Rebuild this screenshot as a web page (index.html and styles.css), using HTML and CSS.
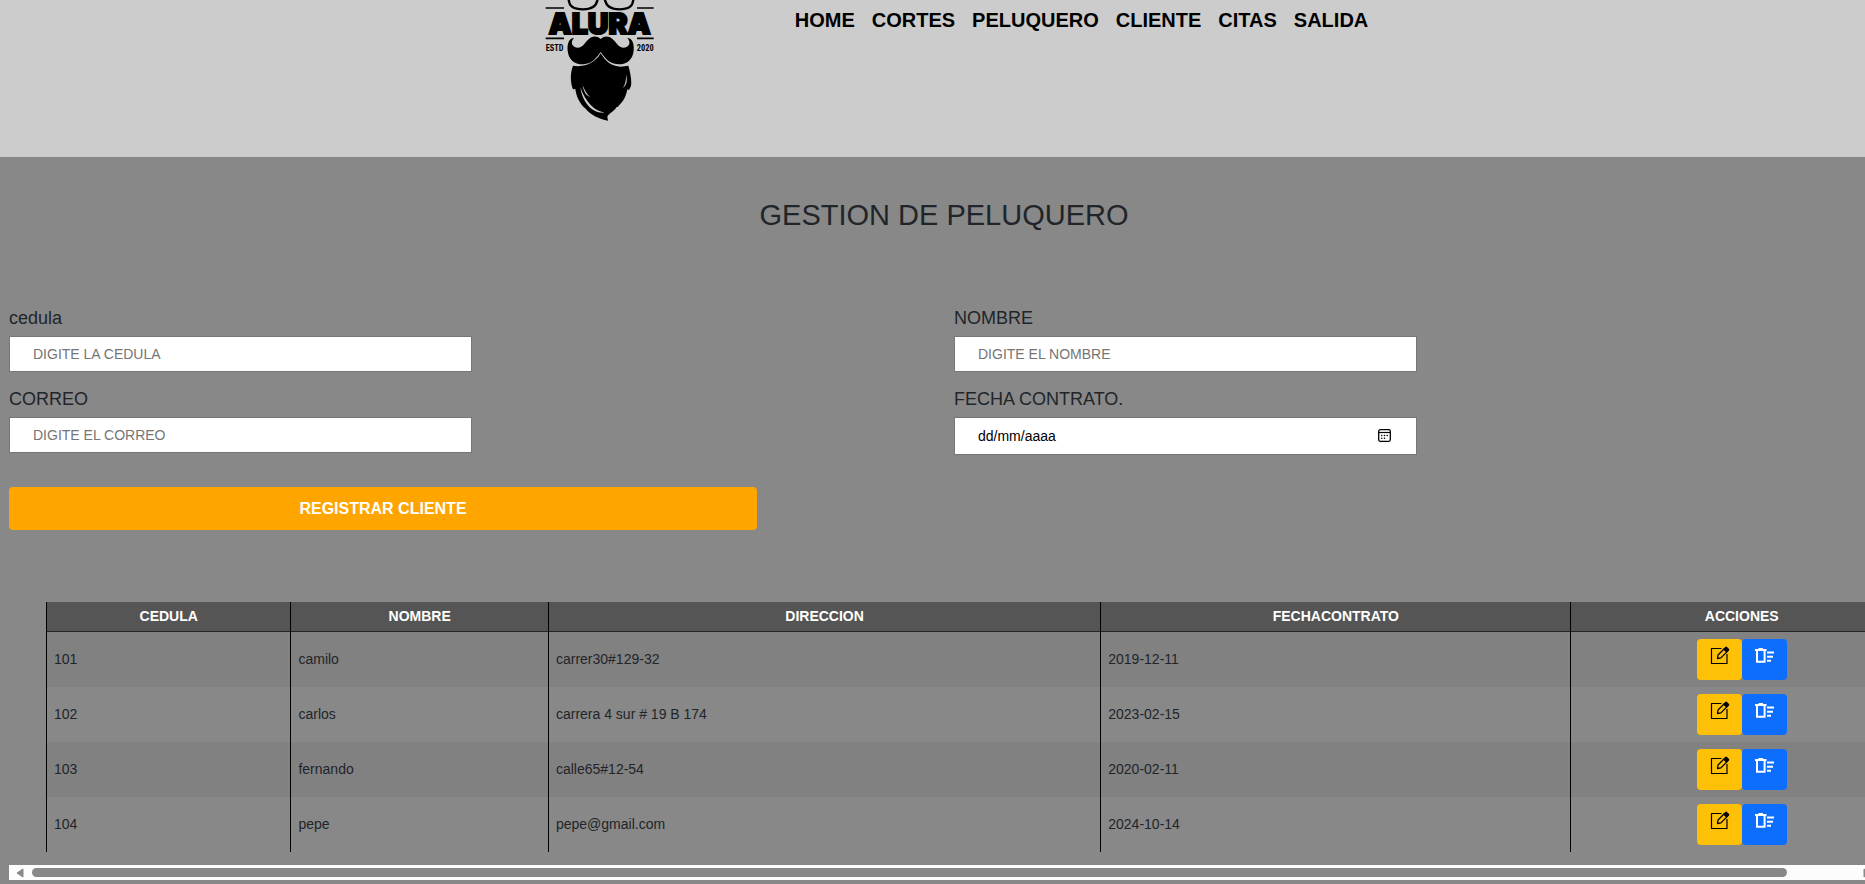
FILE: index.html
```html
<!DOCTYPE html>
<html lang="es">
<head>
<meta charset="utf-8">
<title>Gestion de peluquero</title>
<link rel="stylesheet" href="styles.css">
</head>
<body>
<svg width="0" height="0" class="sprite" aria-hidden="true">
  <symbol id="edit" viewBox="0 0 21 21">
    <path d="M12.500 3.500H2.500v15h15.500V9" fill="none" stroke="currentColor" stroke-width="1.200"/>
    <path d="M8.500 13.500l.5-3.500 6-6 2.900 2.900-6 6z" fill="none" stroke="currentColor" stroke-width="1.300" stroke-linejoin="round"/>
    <path d="M14 4.300l2.200-2.300q.9-.8 1.800 0l2 2q.6.700 0 1.500l-2.300 2.300z" fill="currentColor"/>
  </symbol>
  <symbol id="trash" viewBox="0 0 21 21">
    <path d="M1 5h11.500M4.500 4h4.500M3 5v11.800h7.600V5" fill="none" stroke="currentColor" stroke-width="2"/>
    <path d="M13 7.500h7M13 11.700h6M13 15.800h4" fill="none" stroke="currentColor" stroke-width="1.900"/>
  </symbol>
</svg>
<div class="page">
  <header class="header">
    <svg class="logo" viewBox="78 0 330 363" role="img" aria-label="Alura">
      <g fill="none" stroke="#000" stroke-width="5">
        <path d="M80 24h55M354 24h50M80 115h55M354 115h50"/>
        <path d="M149 -4C149 20 165 28 192 28S234 16 236 -4M257 -4C260 16 274 28 301 28S343 20 343 -4" stroke-width="7"/>
      </g>
      <text class="logo-name" x="242" y="101" text-anchor="middle">ALURA</text>
      <text class="logo-small" x="80" y="152">ESTD</text>
      <text class="logo-small" x="404" y="152" text-anchor="end">2020</text>
      <path d="M245 117C233 105 217 108 207 119C195 132 189 143 177 143C160 143 152 128 165 114C150 114 144 132 146 152C149 180 168 194 193 193C220 191 232 174 245 156C258 174 270 191 297 193C322 194 341 180 344 152C346 132 340 114 325 114C338 128 330 143 313 143C301 143 295 132 283 119C273 108 257 105 245 117Z"/>
      <path d="M245 160C260 184 278 200 305 200L328 197C333 215 339 240 336 258L330 270L325 268C322 285 315 303 301 315L297 320L292 322C288 332 270 340 265 350L267 362C240 356 215 345 200 326L193 320C181 306 172 290 169 267L162 268C153 245 154 217 162 197C195 203 228 190 245 160Z"/>
      <g fill="#ccc">
        <path d="M184 262C190 305 218 342 257 338C225 333 200 306 184 262Z"/>
        <path d="M191 256C193 273 201 287 213 291C203 281 197 271 191 256Z"/>
        <path d="M321 224C326 240 324 255 312 263C319 252 322 240 321 224Z"/>
      </g>
    </svg>
    <nav class="nav">
      <a href="#">HOME</a><a href="#">CORTES</a><a href="#">PELUQUERO</a><a href="#">CLIENTE</a><a href="#">CITAS</a><a href="#">SALIDA</a>
    </nav>
  </header>
  <main class="content">
    <h1 class="title">GESTION DE PELUQUERO</h1>
    <form>
      <div class="fields">
        <div class="field"><label for="cedula">cedula</label><input id="cedula" type="text" placeholder="DIGITE LA CEDULA"></div>
        <div class="field"><label for="nombre">NOMBRE</label><input id="nombre" type="text" placeholder="DIGITE EL NOMBRE"></div>
        <div class="field"><label for="correo">CORREO</label><input id="correo" type="email" placeholder="DIGITE EL CORREO"></div>
        <div class="field"><label for="fecha">FECHA CONTRATO.</label>
          <div class="date"><input id="fecha" type="text" placeholder="dd/mm/aaaa">
            <button class="calendar" type="button" aria-label="Calendario"><svg viewBox="0 0 13 13" width="13" height="13"><rect x=".7" y=".7" width="11.600" height="11.600" rx="1.500" fill="none" stroke="#000" stroke-width="1.300"/><path d="M1 3.500h11" stroke="#000" stroke-width="1.200"/><g fill="#000"><circle cx="3.800" cy="6.500" r=".8"/><circle cx="6.500" cy="6.500" r=".8"/><circle cx="9.200" cy="6.500" r=".8"/><circle cx="3.800" cy="9.200" r=".8"/><circle cx="6.500" cy="9.200" r=".8"/></g></svg></button>
          </div>
        </div>
      </div>
      <button class="submit" type="button">REGISTRAR CLIENTE</button>
    </form>
    <div class="table-area">
      <table class="table">
        <colgroup><col class="c1"><col class="c2"><col class="c3"><col class="c4"><col class="c5"></colgroup>
        <thead><tr><th>CEDULA</th><th>NOMBRE</th><th>DIRECCION</th><th>FECHACONTRATO</th><th>ACCIONES</th></tr></thead>
        <tbody>
          <tr><td>101</td><td>camilo</td><td>carrer30#129-32</td><td>2019-12-11</td><td><div class="actions"><button class="edit" aria-label="Editar"><svg><use href="#edit"/></svg></button><button class="delete" aria-label="Eliminar"><svg><use href="#trash"/></svg></button></div></td></tr>
          <tr><td>102</td><td>carlos</td><td>carrera 4 sur # 19 B 174</td><td>2023-02-15</td><td><div class="actions"><button class="edit" aria-label="Editar"><svg><use href="#edit"/></svg></button><button class="delete" aria-label="Eliminar"><svg><use href="#trash"/></svg></button></div></td></tr>
          <tr><td>103</td><td>fernando</td><td>calle65#12-54</td><td>2020-02-11</td><td><div class="actions"><button class="edit" aria-label="Editar"><svg><use href="#edit"/></svg></button><button class="delete" aria-label="Eliminar"><svg><use href="#trash"/></svg></button></div></td></tr>
          <tr><td>104</td><td>pepe</td><td>pepe@gmail.com</td><td>2024-10-14</td><td><div class="actions"><button class="edit" aria-label="Editar"><svg><use href="#edit"/></svg></button><button class="delete" aria-label="Eliminar"><svg><use href="#trash"/></svg></button></div></td></tr>
        </tbody>
      </table>
    </div>
    <div class="scrollbar">
      <svg viewBox="0 0 8 10" width="8" height="10"><path d="M7 1v8L1 5z" fill="#888" stroke="#888" stroke-linejoin="round"/></svg>
      <div class="thumb"></div>
      <svg viewBox="0 0 8 10" width="8" height="10"><path d="M1 1v8l6-4z" fill="#888" stroke="#888" stroke-linejoin="round"/></svg>
    </div>
  </main>
</div>
</body>
</html>
```
FILE: styles.css
```css
* { box-sizing: border-box; }
body {
  margin: 0;
  background: #888;
  color: #212529;
  font-family: "Liberation Sans", Arial, sans-serif;
  font-size: 14px;
}
button, input { font: inherit; }
.sprite { position: absolute; }
.page { overflow: hidden; padding-bottom: 4px; }
.header {
  display: flex;
  justify-content: center;
  align-items: flex-start;
  gap: 140px;
  padding: 0 0 36px 48px;
  background: #ccc;
}
.logo { width: 110px; height: 121px; }
.logo-name {
  font: 900 86px Inter, sans-serif;
  stroke: #000;
  stroke-width: 6px;
}
.logo-small { font: bold 25px "Liberation Sans Narrow", "Roboto Condensed", Roboto, sans-serif; }
.nav { display: flex; gap: 17px; padding-top: 8px; }
.nav a {
  color: #000;
  font-size: 20px;
  font-weight: bold;
  line-height: 24px;
  text-decoration: none;
}
.content { margin: 0 -14px 0 9px; }
.title {
  margin: 0;
  padding: 41px 0 73px;
  font-size: 29px;
  font-weight: normal;
  line-height: 35px;
  text-align: center;
}
.fields {
  display: grid;
  grid-template-columns: 1fr 1fr;
  gap: 15px 20px;
}
.field label {
  display: block;
  padding-bottom: 6px;
  font-size: 18px;
  line-height: 24px;
}
.field input {
  display: block;
  width: 50%;
  height: 36px;
  padding: 0 23px;
  border: 1px solid #767676;
  border-radius: 0;
  background: #fff;
}
.field input::placeholder { color: #757575; opacity: 1; }
.date { position: relative; width: 50%; }
.field .date input { width: 100%; height: 38px; }
.field .date input::placeholder { color: #000; }
.calendar {
  position: absolute;
  top: 12px;
  right: 26px;
  padding: 0;
  border: 0;
  background: none;
  line-height: 0;
}
.submit {
  width: 40%;
  height: 43px;
  margin: 32px 0 72px;
  border: 0;
  border-radius: 4px;
  background: #ffa500;
  color: #fff;
  font-size: 16px;
  font-weight: bold;
}
.table-area { margin: 0 -34px 0 37px; }
.table {
  width: 100%;
  border-collapse: collapse;
  table-layout: fixed;
  line-height: 21px;
}
.c1 { width: 13.1%; }
.c2 { width: 13.8%; }
.c3 { width: 29.6%; }
.c4 { width: 25.2%; }
.table th {
  padding: 4px 7px;
  border: solid #000;
  border-width: 0 1px;
  background: #555;
  color: #fff;
}
.table thead { border-bottom: 1px solid #212529; }
.table td {
  padding: 7px;
  border: solid #000;
  border-width: 0 1px;
}
.table tbody tr:nth-child(odd) { background: #818181; }
.actions { display: flex; justify-content: center; }
.actions button {
  padding: 6px 12px 14px;
  border: 0;
  border-radius: 4px;
  line-height: 0;
}
.actions svg { width: 21px; height: 21px; }
.edit { background: #ffc107; color: #000; }
.delete { background: #0d6efd; color: #fff; }
.scrollbar {
  display: flex;
  align-items: center;
  height: 15px;
  margin-top: 13px;
  padding: 0 8px 0 7px;
  background: #fcfcfc;
}
.thumb {
  flex: 1;
  height: 9px;
  margin: 0 76px 0 8px;
  border-radius: 5px;
  background: #888;
}
```
